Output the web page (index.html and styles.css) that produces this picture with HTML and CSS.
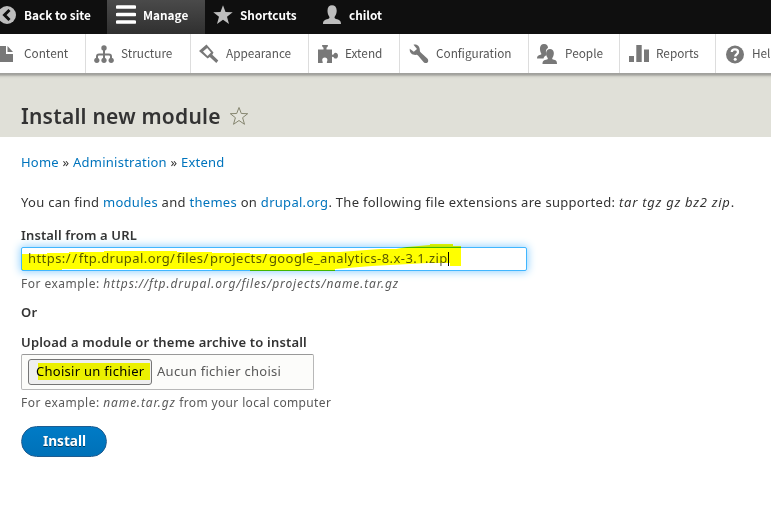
FILE: index.html
```
<!DOCTYPE html>
<html lang="en">
<head>
<meta charset="utf-8">
<title>Install new module</title>
<link rel="stylesheet" href="styles.css">
</head>
<body>
<nav class="bar">
  <a class="tab back"><svg class="icon" viewBox="0 0 20 20"><circle cx="10" cy="10" r="9" fill="#bebebe"/><path d="M12.500 5 7.500 10l5 5" fill="none" stroke="#0f0f0f" stroke-width="3"/></svg><span>Back to site</span></a>
  <a class="tab manage"><svg class="icon" viewBox="0 0 20 20"><path d="M1.500 2h17M1.500 9.500h17M1.500 17h17" stroke="#fff" stroke-width="3.600" stroke-linecap="round"/></svg><span>Manage</span></a>
  <a class="tab shortcuts"><svg class="icon" viewBox="0 0 20 20"><path d="M10 .3l2.500 6.700 7.200.2-5.700 4.500 2 7.300-6-4.200-6 4.200 2-7.300L.3 7.200 7.500 7z" fill="#bebebe"/></svg><span>Shortcuts</span></a>
  <a class="tab user"><svg class="icon" viewBox="0 0 20 20"><path d="M1 19c0-3.500 2-4.300 5-5 1.500-.4 1.800-1.400 1.200-2.500C5.800 9.500 5.500 7.500 5.500 5.500 5.500 2 7.300.3 10 .3s4.700 1.700 4.700 5.200c0 2-.4 4-1.900 6-.6 1.100-.2 2.100 1.200 2.500 3 .7 5 1.500 5 5z" fill="#bebebe"/></svg><span>chilot</span></a>
</nav>
<nav class="tray">
  <a class="item content"><svg class="icon" viewBox="0 0 20 20"><path d="M3 2h6v8h7v8H3zM10.500 2 16 8h-5.500z" fill="#787878"/></svg><span>Content</span></a>
  <a class="item structure"><svg class="icon" viewBox="0 0 20 20"><path d="M10 4v12M3 16v-3.500q0-2 2-2h10q2 0 2 2V16" fill="none" stroke="#787878" stroke-width="2"/><g fill="#787878"><circle cx="10" cy="4" r="2.700"/><circle cx="2.800" cy="16.300" r="2.600"/><circle cx="10" cy="16.300" r="2.600"/><circle cx="17.200" cy="16.300" r="2.600"/></g></svg><span>Structure</span></a>
  <a class="item appearance"><svg class="icon" viewBox="0 0 20 20"><path d="M7.500.5 14.500 8.500l-1.200 2.200 6 5.800-2 2.500-6.500-6-2.200 1.500L0 7z" fill="#787878"/><path d="M8.200 4 12 8.500l-3.500 3.500-4.500-4.500z" fill="#fff"/></svg><span>Appearance</span></a>
  <a class="item extend"><svg class="icon" viewBox="0 0 20 20"><path d="M0 5.500h5.500V3.800Q4 3.300 4 1h6q0 2.300-1.500 2.800v1.700H14v5q1.200.8 2-.8c.6-1.400 4-1.300 4 2s-3.400 3.400-4 2q-.8-1.600-2-.8V19H9c-.6-1 .4-1.400.4-3a2.600 2.600 0 0 0-5.200 0c0 1.600 1 2 .4 3H0z" fill="#787878"/></svg><span>Extend</span></a>
  <a class="item config"><svg class="icon" viewBox="0 0 20 20"><path d="M4.500.8c2.800-.8 6.200 1 6.300 5 .1 1.200 0 1.700 1 2.600l6.500 6.200c2.500 2.500-.6 6.200-3.600 3.600L9 11.500c-1-1-1.500-.7-2.500-.6C3 11 .2 8.500.8 4.700l4 3L8 5z" fill="#787878"/></svg><span>Configuration</span></a>
  <a class="item people"><svg class="icon" viewBox="0 0 20 20"><path d="M0 14.500c0-2.500 1-3 3.500-3.700 1-.3 1-1 .6-1.600C2.500 6.500 2 0 7 0c3 0 4 2 4 4C8.500 5.500 8.500 8 9.800 11c-2 1-3 2-3.300 3.500z" fill="#787878"/><path d="M5.500 20c0-3.500 1.500-3.800 4.500-4.500 1-.3 1-1 .5-1.700-2.200-3.300-2-8.800 2.500-8.800s4.700 5.500 2.500 8.800c-.5.7-.4 1.400.5 1.700 3 .7 4 1 4 4.500z" fill="#787878"/></svg><span>People</span></a>
  <a class="item reports"><svg class="icon" viewBox="0 0 20 20"><path d="M0 12h5v6H0zM7.300 1h5.400v17H7.300zM15 5.500h5V18h-5z" fill="#787878"/></svg><span>Reports</span></a>
  <a class="item help"><svg class="icon" viewBox="0 0 20 20"><circle cx="10" cy="10.500" r="9" fill="#787878"/><path d="M6.800 8c.2-3.500 6.200-3.300 6.200 0 0 2.300-2.800 2.300-2.800 4.600" fill="none" stroke="#fff" stroke-width="2.300"/><circle cx="10.200" cy="15.300" r="1.500" fill="#fff"/></svg><span>Help</span></a>
</nav>
<header class="header">
  <h1>Install new module</h1>
  <svg class="star" viewBox="0 0 20 20"><path d="M10 1.500 12.300 7.500 18.700 7.700 13.600 11.700 15.500 18.300 10 14.500 4.500 18.300 6.400 11.700 1.300 7.700 7.700 7.500z" fill="#e4e4dc" stroke="#85856f"/></svg>
</header>
<main class="page">
  <div class="breadcrumb"><a>Home</a> » <a>Administration</a> » <a>Extend</a></div>
  <p class="intro">You can find <a>modules</a> and <a>themes</a> on <a>drupal.org</a>. The following file extensions are supported: <em>tar tgz gz bz2 zip</em>.</p>
  <div class="label l1">Install from a URL</div>
  <div class="url"><span>https:<b>//</b>ftp.drupal.org<b>/</b>files<b>/</b>projects<b>/</b>google_analytics-8.x-3.1.zip</span><i class="caret"></i>
    <svg class="marker" viewBox="0 0 440 28"><path d="M0 10H25V9H47V8H82V7H155V8H190V9H228V10H278L288 8H318L358 5H374L385 3 408 1V0H431V2H439V22H428V19H406L350 22 313 25V27H228V26H190V25H40V26H0z" fill="#ff0"/></svg>
  </div>
  <div class="desc d1">For example: <em>https://ftp.drupal.org/files/projects/name.tar.gz</em></div>
  <div class="label or">Or</div>
  <div class="label l2">Upload a module or theme archive to install</div>
  <div class="file"><div class="choose">Choisir un fichier</div><span>Aucun fichier choisi</span></div>
  <div class="desc d2">For example: <em>name.tar.gz</em><span class="tail"> from your local computer</span></div>
  <div class="install">Install</div>
</main>
</body>
</html>
```
FILE: styles.css
```
* { box-sizing: border-box; }
body {
  margin: 0;
  width: 771px;
  height: 509px;
  overflow: hidden;
  background: #fff;
  color: #333;
  font: 13px/20px "Noto Sans", sans-serif;
}
a { color: #0074bd; }

.bar, .tray {
  display: flex;
  font-family: "Noto Sans CJK SC", "Noto Sans", sans-serif;
  font-size: 11.8px;
  line-height: 20px;
}
.bar { height: 34px; background: #0f0f0f; font-weight: 700; }
.icon { width: 20px; height: 20px; flex: none; margin-right: 7px; }
.tab { display: flex; align-items: center; color: #fff; padding-bottom: 4px; flex: none; }
.tab span, .item span { margin-top: -1px; }
.back { width: 107px; margin-left: -3px; }
.manage { width: 98px; margin-left: 3px; padding-left: 9px; background: linear-gradient(#4a4a4a, #303030); }
.shortcuts { width: 110px; padding-left: 8px; }
.user { padding-left: 7px; }

.tray {
  height: 39px;
  background: #fff;
}
.item { display: flex; align-items: center; color: #565656; border-right: 1px solid #ddd; flex: none; }
.content { width: 89px; margin-left: -3px; }
.structure { width: 105px; padding-left: 8px; }
.appearance { width: 118px; padding-left: 8px; }
.extend { width: 91px; padding-left: 9px; }
.config { width: 129px; padding-left: 9px; }
.people { width: 91px; padding-left: 8px; }
.people span { margin-left: 1px; }
.reports { width: 96px; padding-left: 9px; }
.help { flex: 1 0 0; min-width: 0; padding-left: 9px; border-right: 0; }

.header {
  display: flex;
  height: 64px;
  padding: 28px 0 0 21px;
  background: linear-gradient(#9f9f9b, #a8a8a3 2px, #c6c6bf 3px, #d8d8d0 4px, #e0e0d8 6px);
}
h1 { margin: 0; width: 208px; font-size: 21px; line-height: 30px; font-weight: 600; letter-spacing: .22px; white-space: nowrap; }
.star { width: 20px; height: 20px; margin-top: 5px; }

.page { padding: 15px 21px 0; }
.breadcrumb { letter-spacing: .24px; }
.intro { margin: 20px 0 0; letter-spacing: .29px; white-space: nowrap; }
.intro em { letter-spacing: .74px; }
.label { font-weight: 600; letter-spacing: .19px; }
.l1 { margin-top: 13px; letter-spacing: .14px; }
.url {
  position: relative;
  display: flex;
  align-items: center;
  width: 506px;
  height: 24px;
  margin-top: 2px;
  padding-left: 6px;
  border: 1px solid #40b6ff;
  border-radius: 2px;
  background: #fff;
  box-shadow: 0 0 8px 1px #92d2ff;
  color: #595959;
  letter-spacing: .43px;
}
.url span { margin-top: -2px; }
.url b { font-weight: 400; letter-spacing: 1.7px; }
.caret { width: 1px; height: 14px; background: #000; }
.marker { position: absolute; left: 0; top: -4px; width: 440px; height: 28px; mix-blend-mode: multiply; }
.desc { font-size: 12px; color: #595959; letter-spacing: .48px; }
.desc em { letter-spacing: .89px; }
.desc .tail { letter-spacing: .35px; }
.d1 { margin-top: 3px; }
.or { margin-top: 8px; }
.l2 { margin-top: 10px; }
.file {
  display: flex;
  align-items: center;
  width: 293px;
  height: 36px;
  margin-top: 2px;
  padding-left: 6px;
  border: 1px solid #b8b8b8;
  border-top-color: #999;
  border-radius: 2px;
  background: #fcfcfa;
  color: #595959;
  letter-spacing: .28px;
}
.file span { margin-top: -2px; }
.choose {
  width: 124px;
  height: 26px;
  padding: 1px 0 0 7px;
  margin-right: 5px;
  border: 1px solid #767676;
  border-radius: 3px;
  background: linear-gradient(#ebf000, #ebf000) 9px 3px / 112px 17px no-repeat #efefef;
  color: #000;
}
.d2 { margin-top: 3px; }
.install {
  width: 86px;
  height: 31px;
  margin-top: 13px;
  padding: 4px 0 0 21px;
  border: 1px solid #1e5c90;
  border-radius: 16px;
  background: linear-gradient(#007bc6, #0071b8);
  color: #fff;
  font-size: 13.6px;
  font-weight: 700;
  text-shadow: 0 1px rgba(0, 0, 0, .5);
}
```
